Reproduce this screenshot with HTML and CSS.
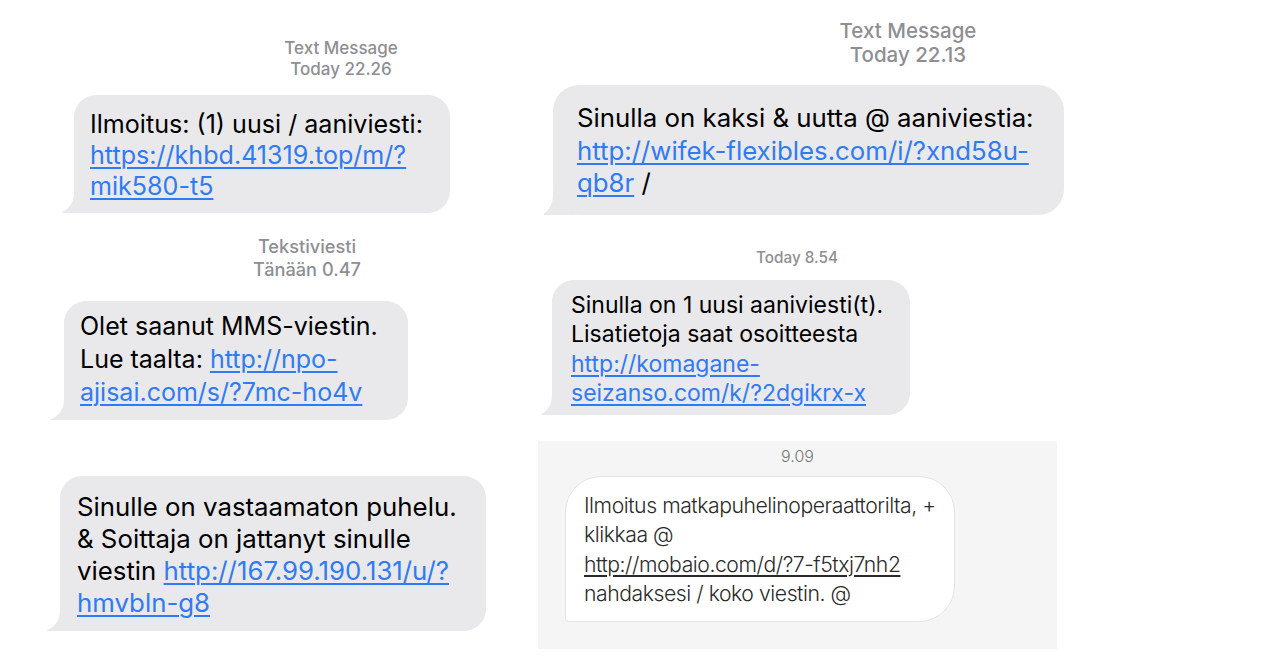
FILE: index.html
```html
<!DOCTYPE html>
<html lang="fi">
<head>
<meta charset="utf-8">
<title>Viestit</title>
<link rel="stylesheet" href="styles.css">
</head>
<body>
<div class="page">
  <div class="col col-left">
    <section class="msg m1">
      <div class="stamp s1"><div>Text Message</div><div>Today 22.26</div></div>
      <div class="bubble b1">Ilmoitus: (1) uusi / aaniviesti:<br><a class="link" href="#">https://khbd.41319.top/m/?<br>mik580-t5</a></div>
    </section>
    <section class="msg m2">
      <div class="stamp s2"><div>Tekstiviesti</div><div>Tänään 0.47</div></div>
      <div class="bubble b2">Olet saanut MMS-viestin.<br>Lue taalta: <a class="link" href="#">http://npo-<br>ajisai.com/s/?7mc-ho4v</a></div>
    </section>
    <section class="msg m3">
      <div class="bubble b3">Sinulle on vastaamaton puhelu.<br>&amp; Soittaja on jattanyt sinulle<br>viestin <a class="link" href="#">http://167.99.190.131/u/?<br>hmvbln-g8</a></div>
    </section>
  </div>
  <div class="col col-right">
    <section class="msg m4">
      <div class="stamp s4"><div>Text Message</div><div>Today 22.13</div></div>
      <div class="bubble b4">Sinulla on kaksi &amp; uutta @ aaniviestia:<br><a class="link" href="#">http://wifek-flexibles.com/i/?xnd58u-<br>qb8r</a> /</div>
    </section>
    <section class="msg m5">
      <div class="stamp s5"><div>Today 8.54</div></div>
      <div class="bubble b5">Sinulla on 1 uusi aaniviesti(t).<br>Lisatietoja saat osoitteesta<br><a class="link" href="#">http://komagane-<br>seizanso.com/k/?2dgikrx-x</a></div>
    </section>
    <section class="msg m6">
      <div class="stamp s6">9.09</div>
      <div class="card">Ilmoitus matkapuhelinoperaattorilta, +<br>klikkaa @<br><a class="card-link" href="#">http://mobaio.com/d/?7-f5txj7nh2</a><br>nahdaksesi / koko viestin. @</div>
    </section>
  </div>
</div>
</body>
</html>
```

FILE: styles.css
```css
* { box-sizing: border-box; }

html, body {
  margin: 0;
  padding: 0;
  background: #ffffff;
}

body {
  width: 1280px;
  height: 668px;
  overflow: hidden;
  font-family: "Inter", "Liberation Sans", sans-serif;
  color: #000;
}

.page {
  display: flex;
  align-items: flex-start;
}

.col { display: flex; flex-direction: column; align-items: flex-start; }
.col-left { width: 530px; padding-top: 38px; }
.col-right { flex: 1; padding-top: 19px; }

.msg { display: flex; flex-direction: column; align-items: flex-start; }

.stamp {
  color: #8e8e93;
  font-weight: 500;
  text-align: center;
  align-self: stretch;
}

/* left column */
.m1 { margin-left: 74px; width: 534px; }
.s1 { font-size: 17px; line-height: 21px; margin-bottom: 15px; }

.m2 { margin-left: 64px; width: 486px; margin-top: 22px; }
.s2 { font-size: 18.2px; line-height: 23px; margin-bottom: 20px; }

.m3 { margin-left: 60px; margin-top: 56px; }

/* right column */
.m4 { margin-left: 23px; width: 710px; }
.s4 { font-size: 20.5px; line-height: 24px; margin-bottom: 18px; }

.m5 { margin-left: 22px; width: 490px; margin-top: 33px; }
.s5 { font-size: 15.3px; line-height: 20px; margin-bottom: 12px; }

.m6 {
  margin-left: 8px;
  margin-top: 26px;
  width: 519px;
  height: 208px;
  background: #f5f5f5;
  padding: 5px 0 0 27px;
}
.s6 {
  font-weight: 300;
  color: #777;
  font-size: 16px;
  line-height: 20px;
  margin-left: -27px;
  margin-bottom: 10px;
}

/* iMessage style bubbles */
.bubble {
  --tail: 12px;
  position: relative;
  z-index: 0;
  background: #e9e9eb;
  border-radius: 22px;
  white-space: nowrap;
  color: #000;
}
.bubble::before {
  content: "";
  position: absolute;
  z-index: -1;
  bottom: 0;
  left: calc(-1 * var(--tail));
  width: calc(var(--tail) + 22px);
  height: 24px;
  background: #e9e9eb;
}
.bubble::after {
  content: "";
  position: absolute;
  z-index: -1;
  bottom: 0;
  left: -30px;
  width: 30px;
  height: 24px;
  background: #ffffff;
  border-bottom-right-radius: calc(var(--tail) + 6px) 20px;
}

.link {
  color: #2f7bf6;
  text-decoration: underline;
  text-decoration-thickness: 1.5px;
  text-underline-offset: 3px;
}

.b1 { width: 376px; height: 118px; font-size: 25.1px; line-height: 31px; padding: 14px 0 0 16px; }
.b2 { width: 344px; height: 119px; font-size: 25px; line-height: 33px; padding: 9px 0 0 16px; --tail: 13px; }
.b3 { width: 426px; height: 155px; font-size: 25.8px; line-height: 32px; padding: 15px 0 0 17px; --tail: 13px; }
.b4 { width: 511px; height: 130px; font-size: 25.8px; line-height: 32.5px; padding: 17px 0 0 24px; --tail: 9px; border-radius: 26px; }
.b5 { width: 358px; height: 135px; font-size: 23px; line-height: 29.3px; padding: 11px 0 0 19px; --tail: 10px; }

.card {
  width: 390px;
  height: 146px;
  background: #ffffff;
  border: 1px solid #e4e4e4;
  border-radius: 36px 36px 36px 4px;
  padding: 14px 0 0 18px;
  font-weight: 300;
  font-size: 21.2px;
  line-height: 29.3px;
  letter-spacing: -0.45px;
  color: #2a2a2a;
  white-space: nowrap;
}
.card-link {
  color: #2a2a2a;
  text-decoration: underline;
  text-underline-offset: 3px;
}
```
